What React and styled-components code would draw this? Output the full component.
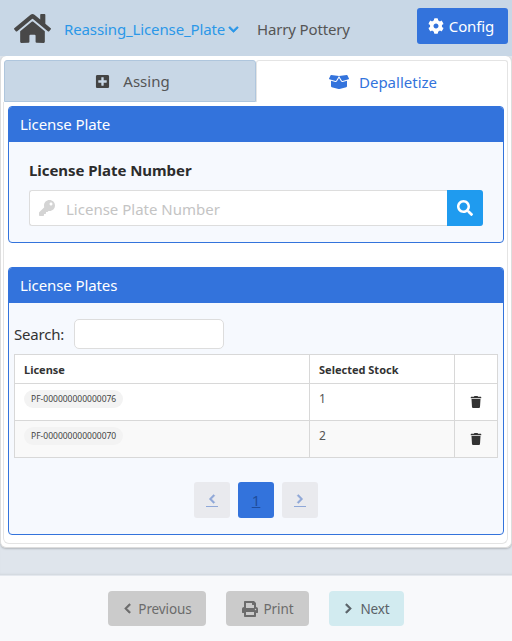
import React from "react";
import styled, { createGlobalStyle } from "styled-components";
import { FaHome, FaChevronDown, FaCog, FaPlusSquare, FaBoxOpen, FaKey, FaSearch, FaTrash, FaChevronLeft, FaChevronRight, FaPrint } from "react-icons/fa";

const Global = createGlobalStyle`
  html, body { margin: 0; padding: 0; }
  body { background: #dfe5ec; font-family: "Noto Sans", "Open Sans", sans-serif; font-size: 15px; color: #333; }
  * { box-sizing: border-box; }
`;
const Page = styled.div`width: 512px; height: 641px; display: flex; flex-direction: column; overflow: hidden;`;
const Header = styled.header`height: 56px; background: #c8d7e6; display: flex; align-items: flex-start; position: relative;`;
const HomeIcon = styled(FaHome)`width: 37px; height: 37px; color: #484848; margin: 10px 0 0 14px; flex: none;`;
const AppLink = styled.div`display: flex; align-items: center; color: #2b97e8; font-size: 15px; margin: 19px 0 0 13px; line-height: 20px; letter-spacing: -0.12px; width: 174px; white-space: nowrap;`;
const Caret = styled(FaChevronDown)`width: 11px; height: 11px; margin-left: 3px; flex: none; stroke: currentColor; stroke-width: 30;`;
const UserName = styled.div`color: #555; font-size: 15px; line-height: 20px; margin: 19px 0 0 19px; letter-spacing: -0.15px; white-space: nowrap;`;
const ConfigButton = styled.button`position: absolute; right: 4px; top: 8px; width: 91px; height: 36px; border: 0; border-radius: 3px; background: #3373dc; color: #fff; font: inherit; display: flex; align-items: center; justify-content: center; gap: 5px; padding: 0 3px 0 0; letter-spacing: -0.1px;`;
const Card = styled.main`height: 492px; flex: none; background: #fff; border: 1px solid #ddd; border-top: 0; border-radius: 6px; padding: 4px 3px 3px 2px; box-shadow: 0 1px 2px rgba(0,0,0,.2); display: flex; flex-direction: column;`;
const Tabs = styled.div`display: flex; height: 42px; flex: none; margin-left: 1px;`;
const Tab = styled.div`flex: 0 0 50%; display: flex; align-items: center; justify-content: center; gap: ${p => p.$gap}px; padding-left: ${p => p.$shift}px; font-size: 15px; border: 1px solid ${p => p.$active ? "#e4e4e4" : "#afc6dd"}; border-bottom: ${p => p.$active ? "0" : "1px solid #afc6dd"}; border-radius: 3px 3px 0 0; background: ${p => p.$active ? "#fff" : "#c8d7e6"}; color: ${p => p.$active ? "#3373dc" : "#555"};`;
const TabBody = styled.div`flex: 1; padding: 4px 3px 0 4px; border: 1px solid #e4e4e4; border-top: 0; display: flex; flex-direction: column; gap: 24px; border-radius: 0 0 6px 6px;`;
const Panel = styled.section`border: 1px solid #3373dc; border-radius: 4px; background: #f6f9fe; height: ${p => p.$h}px; overflow: hidden; flex: none;`;
const PanelTitle = styled.h2`margin: -1px -1px 0; background: #3373dc; color: #fff; height: 36px; padding: 0 12px; font-size: 15px; font-weight: 400; line-height: 37px; letter-spacing: -0.1px;`;
const Form = styled.div`padding: 18px 20px 0;`;
const FieldLabel = styled.label`display: block; font-weight: 700; font-size: 15px; line-height: 20px; color: #2c2c2c; letter-spacing: -0.05px;`;
const InputGroup = styled.div`display: flex; height: 36px; margin-top: 10px; background: #fff; border: 1px solid #ddd; border-right: 0; border-radius: 3px;`;
const KeyIcon = styled(FaKey)`width: 16px; height: 16px; color: #d4d4d4; margin: 9px 0 0 9px; flex: none;`;
const Placeholder = styled.span`flex: 1; color: #c4c4c4; font-size: 15px; line-height: 36px; padding-left: 11px;`;
const SearchButton = styled.button`width: 36px; height: 36px; margin: -1px 0; border: 0; background: #1f9bef; color: #fff; border-radius: 0 3px 3px 0; display: flex; align-items: center; justify-content: center; padding: 0;`;
const SearchRow = styled.div`display: flex; align-items: center; padding: 16px 0 0 5px; gap: 10px; height: 46px; font-size: 15px; color: #333; letter-spacing: -0.2px;`;
const SearchBox = styled.div`width: 150px; height: 30px; background: #fff; border: 1px solid #ddd; border-radius: 5px;`;
const TableWrap = styled.table`border-collapse: collapse; margin: 5px 0 0 5px; width: 483px; table-layout: fixed; font-size: 12px;`;
const Th = styled.th`border: 1px solid #d8d8d8; background: #fff; height: 29px; padding: 0 9px; text-align: left; font-size: 11px; font-weight: 700; color: #333; width: ${p => p.$w}px;`;
const Row = styled.tr`background: ${p => p.$alt ? "#f9f9f9" : "#fff"};`;
const Td = styled.td`border: 1px solid #d8d8d8; height: 37px; padding: 0 9px 7px; vertical-align: middle; color: #555; font-size: 12px;`;
const IconTd = styled(Td)`padding: 2px 0 0 0; text-align: center; color: #333;`;
const Chip = styled.span`display: inline-block; height: 18px; line-height: 18px; padding: 0 7px; border-radius: 9px; background: #f3f3f3; font-size: 8.5px; color: #444; white-space: nowrap;`;
const Pager = styled.nav`display: flex; justify-content: center; gap: 8px; margin-top: 24px;`;
const PageButton = styled.a`width: 36px; height: 36px; border-radius: 3px; display: flex; align-items: center; justify-content: center; text-decoration: underline; background: ${p => p.$active ? "#3373dc" : "#e9eaee"}; color: ${p => p.$active ? "#1f4d9c" : "#8fa8d8"}; font-size: 15px;`;
const Underlined = styled.span`display: flex; flex-direction: column; align-items: center; border-bottom: 1px solid #8fa8d8; padding: 0 1px 2px;`;
const Spacer = styled.div`height: 27px; flex: none; box-shadow: inset 0 -2px 3px -2px rgba(0,0,0,.12);`;
const Footer = styled.footer`flex: 1; background: #f8f9fb; display: flex; justify-content: center; gap: 20px; padding-top: 15px; border-top: 1px solid #e4e8ee;`;
const FootButton = styled.button`height: 35px; width: ${p => p.$w}px; border: 0; border-radius: 4px; background: ${p => p.$next ? "#d2ebf0" : "#cbcbcb"}; color: ${p => p.$next ? "#5a6268" : "#6c6c6c"}; font: inherit; font-size: 13.5px; letter-spacing: -0.1px; display: flex; align-items: center; justify-content: center; gap: ${p => p.$gap}px; padding: 0;`;
const BoldLeft = styled(FaChevronLeft)`stroke: currentColor; stroke-width: 30; width: ${p => p.$s}px; height: ${p => p.$s}px;`;
const BoldRight = styled(FaChevronRight)`stroke: currentColor; stroke-width: 30; width: ${p => p.$s}px; height: ${p => p.$s}px;`;

export default function App() {
  return (
    <Page>
      <Global />
      <Header>
        <HomeIcon />
        <AppLink>Reassing_License_Plate<Caret /></AppLink>
        <UserName>Harry Pottery</UserName>
        <ConfigButton><FaCog size={16} />Config</ConfigButton>
      </Header>
      <Card>
        <Tabs>
          <Tab $gap={13} $shift={5}><FaPlusSquare size={15} color="#444" />Assing</Tab>
          <Tab $active $gap={10} $shift={2}><FaBoxOpen size={20} />Depalletize</Tab>
        </Tabs>
        <TabBody>
          <Panel $h={137}>
            <PanelTitle>License Plate</PanelTitle>
            <Form>
              <FieldLabel>License Plate Number</FieldLabel>
              <InputGroup>
                <KeyIcon />
                <Placeholder>License Plate Number</Placeholder>
                <SearchButton><FaSearch size={16} /></SearchButton>
              </InputGroup>
            </Form>
          </Panel>
          <Panel $h={268}>
            <PanelTitle>License Plates</PanelTitle>
            <SearchRow>Search:<SearchBox /></SearchRow>
            <TableWrap>
              <thead>
                <tr><Th $w={295}>License</Th><Th $w={145}>Selected Stock</Th><Th $w={43} /></tr>
              </thead>
              <tbody>
                <Row><Td><Chip>PF-000000000000076</Chip></Td><Td>1</Td><IconTd><FaTrash size={12} /></IconTd></Row>
                <Row $alt><Td><Chip>PF-000000000000070</Chip></Td><Td>2</Td><IconTd><FaTrash size={12} /></IconTd></Row>
              </tbody>
            </TableWrap>
            <Pager>
              <PageButton><Underlined><BoldLeft $s={10} /></Underlined></PageButton>
              <PageButton $active>1</PageButton>
              <PageButton><Underlined><BoldRight $s={10} /></Underlined></PageButton>
            </Pager>
          </Panel>
        </TabBody>
      </Card>
      <Spacer />
      <Footer>
        <FootButton $w={98} $gap={5}><BoldLeft $s={11} />Previous</FootButton>
        <FootButton $w={83} $gap={6}><FaPrint size={16} />Print</FootButton>
        <FootButton $w={75} $gap={6} $next><BoldRight $s={11} />Next</FootButton>
      </Footer>
    </Page>
  );
}
